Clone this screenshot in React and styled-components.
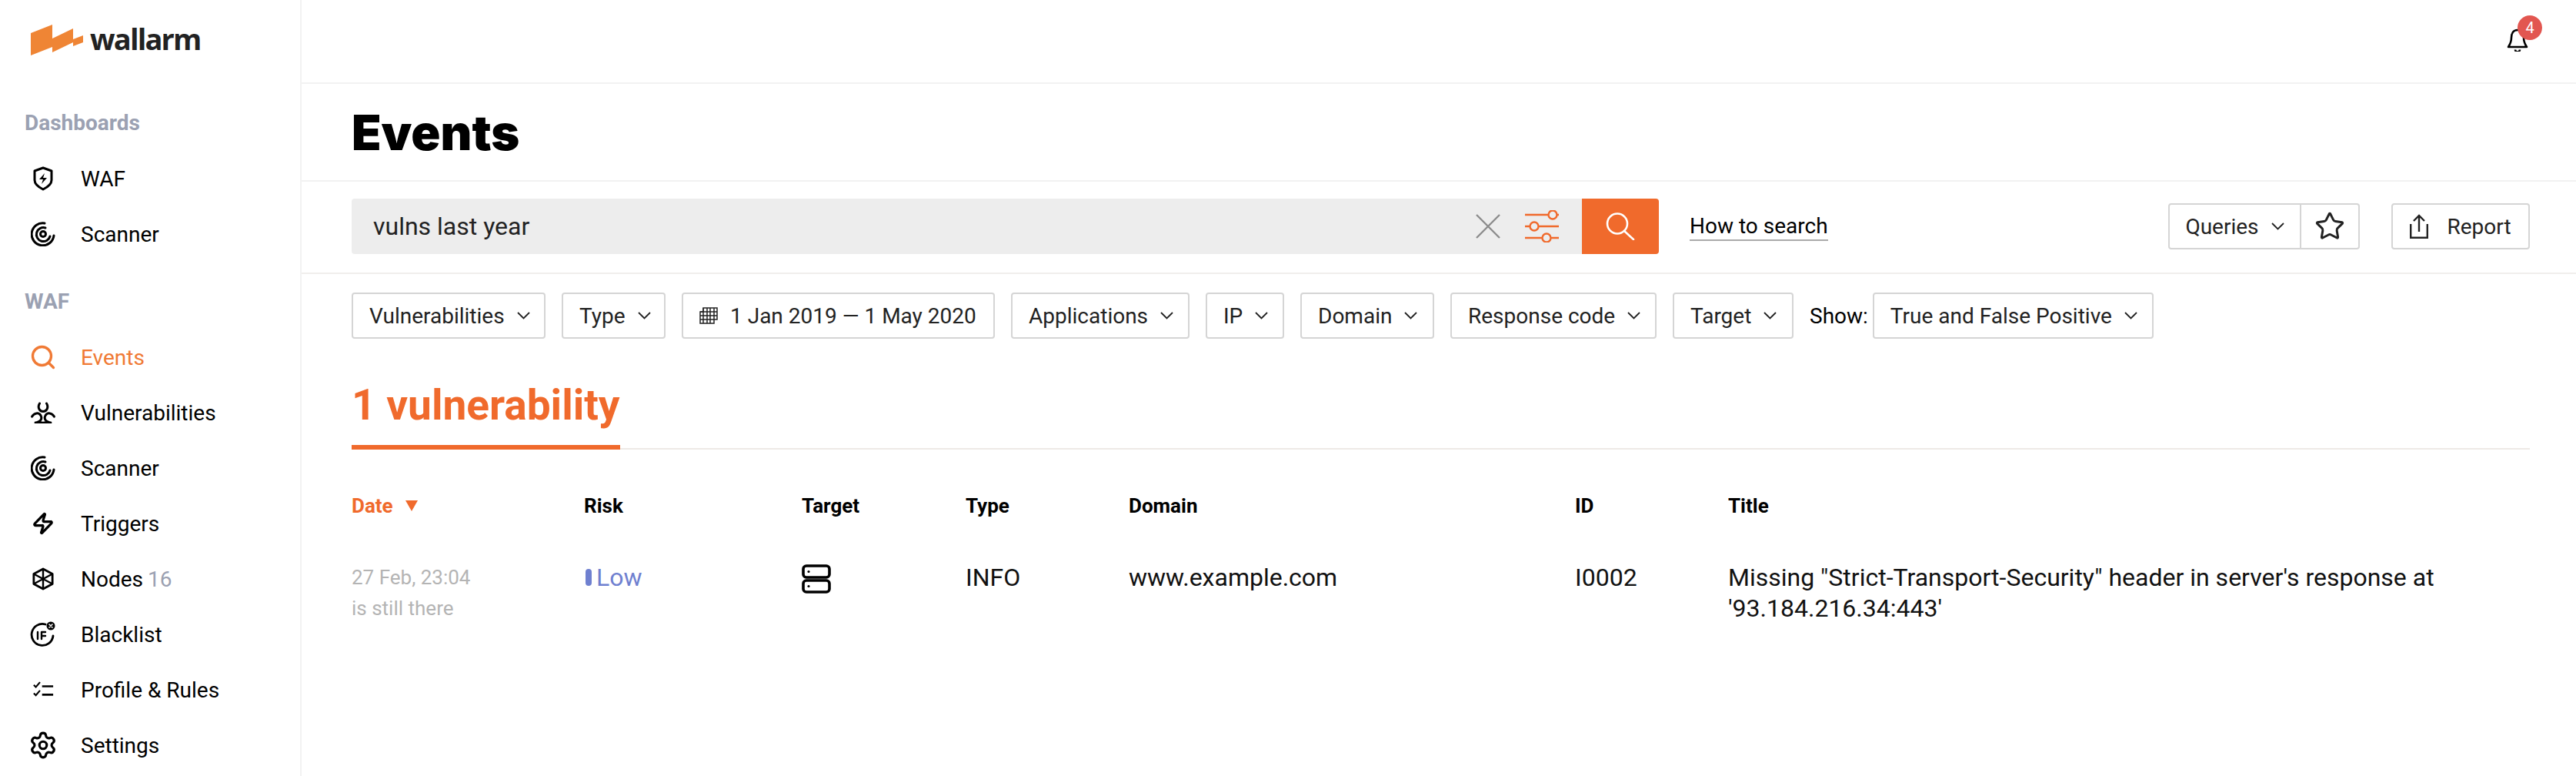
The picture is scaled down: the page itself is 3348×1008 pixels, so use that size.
import React from 'react'
import styled, { createGlobalStyle } from 'styled-components'
import { Search, Star, Settings, Zap } from 'lucide-react'

const Global = createGlobalStyle`
  html, body { margin: 0; padding: 0; background: #fff; }
  body { font-family: Roboto, "Liberation Sans", sans-serif; color: #000; -webkit-font-smoothing: antialiased; }
  * { box-sizing: border-box; }
`

const Page = styled.div`
  display: flex;
  width: 3348px;
  height: 1008px;
  overflow: hidden;
`

const Sidebar = styled.aside`
  width: 392px;
  flex: none;
  border-right: 2px solid #f2f2f2;
  padding: 32px 0 0 32px;
`

const LogoRow = styled.div`
  display: flex;
  align-items: center;
  gap: 7px;
  height: 42px;
  margin-left: 8px;
`

const LogoText = styled.span`
  font-family: "Open Sans", sans-serif;
  font-size: 38px;
  font-weight: 700;
  letter-spacing: -1.8px;
  color: #222;
  line-height: 42px;
  position: relative;
  top: -3px;
`

const NavGroup = styled.div`
  margin-top: ${p => p.$top}px;
`

const NavTitle = styled.div`
  font-size: 28px;
  font-weight: 700;
  color: #9ba1b2;
  line-height: 32px;
  margin-bottom: 20px;
`

const NavItem = styled.div`
  display: flex;
  align-items: center;
  height: 72px;
  font-size: 28px;
  color: ${p => (p.$active ? '#f07a35' : '#000')};
`

const NavIcon = styled.span`
  width: 40px;
  height: 40px;
  margin-left: 4px;
  margin-right: 29px;
  display: flex;
  align-items: center;
  justify-content: center;
`

const Count = styled.span`
  color: #9ba1b2;
  margin-left: 6px;
`

const Main = styled.main`
  flex: 1;
  min-width: 0;
`

const TopBar = styled.div`
  height: 109px;
  border-bottom: 2px solid #f2f2f2;
  display: flex;
  justify-content: flex-end;
  padding: 37px 62px 0 0;
`

const BellWrap = styled.div`
  position: relative;
  width: 28px;
  height: 30px;
`

const Badge = styled.span`
  position: absolute;
  left: 14px;
  top: -17px;
  width: 32px;
  height: 32px;
  border-radius: 50%;
  background: #e25650;
  color: #fff;
  font-size: 20px;
  display: flex;
  align-items: center;
  justify-content: center;
`

const TitleBar = styled.div`
  height: 127px;
  border-bottom: 2px solid #f2f2f2;
  padding-left: 65px;
  display: flex;
  align-items: center;
`

const Title = styled.h1`
  margin: 0;
  font-family: Inter, sans-serif;
  font-size: 63px;
  font-weight: 900;
`

const SearchBar = styled.div`
  height: 120px;
  border-bottom: 2px solid #f0eeec;
  padding: 22px 60px 0 65px;
  display: flex;
  align-items: flex-start;
`

const SearchField = styled.div`
  width: 1599px;
  height: 72px;
  background: #ededed;
  border-radius: 4px 0 0 4px;
  display: flex;
  align-items: center;
  padding: 0 30px 0 28px;
  gap: 32px;
  font-size: 32px;
  color: #222;
`

const SearchText = styled.span`
  flex: 1;
`

const SearchButton = styled.button`
  width: 100px;
  height: 72px;
  padding: 0;
  border: 0;
  border-radius: 0 4px 4px 0;
  background: #f06a2c;
  display: flex;
  align-items: center;
  justify-content: center;
`

const HowTo = styled.a`
  margin: 17px 0 0 40px;
  font-size: 28px;
  line-height: 38px;
  height: 38px;
  color: #000;
  border-bottom: 2px solid #aaa;
`

const Right = styled.div`
  margin-left: auto;
  display: flex;
  gap: 41px;
  padding-top: 6px;
`

const Outline = styled.div`
  height: 60px;
  border: 2px solid #d5d5d5;
  border-radius: 4px;
  display: flex;
  align-items: center;
  font-size: 28px;
  color: #222;
  white-space: nowrap;
  background: #fff;
`

const Part = styled.div`
  display: flex;
  align-items: center;
  justify-content: center;
  height: 100%;
  width: ${p => p.$w}px;
  border-left: ${p => (p.$div ? '2px solid #d5d5d5' : '0')};
  gap: ${p => p.$gap || 0}px;
`

const Filters = styled.div`
  display: flex;
  align-items: center;
  gap: 21px;
  padding: 24px 0 0 65px;
`

const Filter = styled(Outline)`
  width: ${p => p.$w}px;
  padding-left: 21px;
  gap: 16px;
`

const ShowLabel = styled.span`
  font-size: 28px;
  margin-right: -15px;
`

const Content = styled.div`
  padding: 0 60px 0 65px;
`

const Tabs = styled.div`
  margin-top: 40px;
  height: 104px;
  border-bottom: 2px solid #eeeae6;
`

const Tab = styled.div`
  display: inline-block;
  height: 104px;
  line-height: 92px;
  font-size: 55px;
  font-weight: 700;
  color: #f06a2c;
  border-bottom: 6px solid #f06a2c;
  white-space: nowrap;
`

const Row = styled.div`
  display: grid;
  grid-template-columns: 302px 283px 213px 212px 580px 199px 1fr;
`

const HeadRow = styled(Row)`
  margin-top: 57px;
  height: 32px;
  align-items: center;
  font-size: 26px;
  font-weight: 700;
`

const HeadCell = styled.div`
  color: ${p => (p.$active ? '#f06a2c' : '#000')};
  display: flex;
  align-items: center;
  gap: 16px;
`

const Caret = styled.span`
  width: 0;
  height: 0;
  border-left: 8px solid transparent;
  border-right: 8px solid transparent;
  border-top: 14px solid #f06a2c;
`

const BodyRow = styled(Row)`
  margin-top: 57px;
  font-size: 32px;
  line-height: 40px;
  color: #111;
`

const DateCell = styled.div`
  font-size: 26px;
  line-height: 40px;
  color: #b4b4b4;
`

const Risk = styled.div`
  display: flex;
  align-items: center;
  height: 40px;
  color: #6f80d0;
  gap: 6px;
  padding-left: 2px;
`

const RiskMark = styled.span`
  width: 8px;
  height: 22px;
  border-radius: 4px;
  background: #6f80d0;
`

const TargetCell = styled.div`
  padding-top: 3px;
  line-height: 0;
`

const Shield = () => (
  <svg width="26" height="32" viewBox="0 0 26 32" fill="none" stroke="#000" strokeWidth="3">
    <path d="M13 2 L24 6 V18 C24 23 19 27 13 30 C7 27 2 23 2 18 V6 Z" strokeLinejoin="round" />
    <path d="M15 9 L8 17 H13 L11 23 L18 15 H13 Z" fill="#000" stroke="none" />
  </svg>
)

const Radar = () => (
  <svg width="32" height="32" viewBox="0 0 32 32" fill="none" stroke="#000" strokeWidth="3" strokeLinecap="round">
    <path d="M18 2 A14.5 14.5 0 1 0 30 18" />
    <path d="M19 8 A9 9 0 1 0 25 19" />
    <circle cx="16" cy="16" r="3.5" />
  </svg>
)

const lobe = 'M11.5 2 C8.5 7 11 12.5 16 12.5 C21 12.5 23.5 7 20.5 2'

const Biohazard = () => (
  <svg width="32" height="28" viewBox="0 0 32 28" fill="none" stroke="#000" strokeWidth="3" strokeLinecap="round">
    <path d={lobe} />
    <path d={lobe} transform="rotate(120 16 16)" />
    <path d={lobe} transform="rotate(240 16 16)" />
    <path d="M9.5 26 C13 27.5 19 27.5 22.5 26" />
  </svg>
)

const Nodes = () => (
  <svg width="28" height="30" viewBox="0 0 30 32" fill="none" stroke="#000" strokeWidth="3" strokeLinejoin="round">
    <path d="M15 2 L28 9 V23 L15 30 L2 23 V9 Z" />
    <path d="M15 2 V30 M2 9 L28 23 M28 9 L2 23" strokeWidth="2.6" />
  </svg>
)

const BlackIcon = () => (
  <svg width="34" height="34" viewBox="0 0 34 34" fill="none" stroke="#000" strokeWidth="2.8" strokeLinecap="round">
    <path d="M20 4 A14 14 0 1 0 30 19" />
    <path d="M10 14 V23 M15 14 V23 M15 14 H20 M15 19 H20" strokeWidth="2.4" />
    <circle cx="27" cy="6" r="5.5" fill="#000" stroke="none" />
    <path d="M25 4 L29 8 M29 4 L25 8" stroke="#fff" strokeWidth="1.6" />
  </svg>
)

const Rules = () => (
  <svg width="27" height="22" viewBox="0 0 30 24" fill="none" stroke="#000" strokeWidth="3">
    <path d="M1 5 L4 8 L10 1 M1 17 L4 20 L10 13" strokeWidth="2.4" />
    <path d="M13 7 H29 M13 19 H29" />
  </svg>
)

const Logo = () => (
  <svg width="70" height="42" viewBox="0 0 70 42">
    <path d="M0 11 L28 0 V18 L55 5 V19 L68 14 V23 L55 28 V23 L28 36 V29 L0 40 Z" fill="#ef8535" />
  </svg>
)

const BellIcon = () => (
  <svg width="28" height="30" viewBox="0 0 28 30" fill="none" stroke="#000" strokeWidth="2.6" strokeLinejoin="round">
    <path d="M14 2 C8 2 6 7 6 12 C6 18 4 21 2 24 H26 C24 21 22 18 22 12 C22 7 20 2 14 2 Z" />
    <path d="M11 27.5 A3 3 0 0 0 17 27.5" />
  </svg>
)

const Clear = () => (
  <svg width="32" height="32" viewBox="0 0 32 32" stroke="#8c8c8c" strokeWidth="2.4">
    <path d="M1 1 L31 31 M31 1 L1 31" />
  </svg>
)

const Sliders = () => (
  <svg width="44" height="42" viewBox="0 0 44 42" fill="none" stroke="#f06a2c" strokeWidth="2.4">
    <path d="M0 6 H30 M42 6 H44 M0 21 H6 M18 21 H44 M0 36 H22 M34 36 H44" />
    <circle cx="36" cy="6" r="5.5" />
    <circle cx="12" cy="21" r="5.5" />
    <circle cx="28" cy="36" r="5.5" />
  </svg>
)

const SearchGlyph = () => (
  <svg width="38" height="36" viewBox="0 0 38 36" fill="none" stroke="#fff" strokeWidth="2.6" strokeLinecap="round">
    <circle cx="15" cy="14.5" r="13" />
    <path d="M24 24 L36 35" />
  </svg>
)

const Calendar = () => (
  <svg width="24" height="22" viewBox="0 0 24 22" fill="none" stroke="#222" strokeWidth="1.5">
    <path d="M5 1 H23 V16 H19 V21 H1 V6 H5 Z" />
    <path d="M5 1 V21 M10 1 V21 M14 1 V21 M19 1 V16 M1 6 H23 M1 11 H23 M1 16 H19" />
  </svg>
)

const Chevron = () => (
  <svg width="17" height="10" viewBox="0 0 17 10" fill="none" stroke="#222" strokeWidth="1.8">
    <path d="M1 1 L8.5 8.5 L16 1" />
  </svg>
)

const ShareIcon = () => (
  <svg width="24" height="32" viewBox="0 0 24 32" fill="none" stroke="#222" strokeWidth="2.4">
    <path d="M1.2 13 V30.8 H22.8 V13" />
    <path d="M12 23 V2 M5 9 L12 2 L19 9" />
  </svg>
)

const ServerIcon = () => (
  <svg width="38" height="38" viewBox="0 0 38 38" fill="none" stroke="#000" strokeWidth="3.6">
    <rect x="2" y="2" width="34" height="15" rx="4" />
    <rect x="2" y="21" width="34" height="15" rx="4" />
    <circle cx="9" cy="9.5" r="1.6" fill="#000" stroke="none" />
    <circle cx="9" cy="28.5" r="1.6" fill="#000" stroke="none" />
  </svg>
)

const dash = [
  { icon: <Shield />, label: 'WAF' },
  { icon: <Radar />, label: 'Scanner' },
]

const waf = [
  { icon: <Search size={36} color="#f07a35" strokeWidth={2.2} />, label: 'Events', active: true },
  { icon: <Biohazard />, label: 'Vulnerabilities' },
  { icon: <Radar />, label: 'Scanner' },
  { icon: <Zap size={30} color="#000" strokeWidth={2.6} />, label: 'Triggers' },
  { icon: <Nodes />, label: 'Nodes', count: 16 },
  { icon: <BlackIcon />, label: 'Blacklist' },
  { icon: <Rules />, label: 'Profile & Rules' },
  { icon: <Settings size={38} color="#000" strokeWidth={2} />, label: 'Settings' },
]

const filters = [
  ['Vulnerabilities', 252],
  ['Type', 135],
]

const filters2 = [
  ['Applications', 232],
  ['IP', 102],
  ['Domain', 174],
  ['Response code', 268],
  ['Target', 157],
]

function NavList({ items }) {
  return items.map(it => (
    <NavItem key={it.label} $active={it.active}>
      <NavIcon>{it.icon}</NavIcon>
      {it.label}
      {it.count && <Count>{it.count}</Count>}
    </NavItem>
  ))
}

export default function App() {
  return (
    <Page>
      <Global />
      <Sidebar>
        <LogoRow>
          <Logo />
          <LogoText>wallarm</LogoText>
        </LogoRow>
        <NavGroup $top={70}>
          <NavTitle>Dashboards</NavTitle>
          <NavList items={dash} />
        </NavGroup>
        <NavGroup $top={36}>
          <NavTitle>WAF</NavTitle>
          <NavList items={waf} />
        </NavGroup>
      </Sidebar>
      <Main>
        <TopBar>
          <BellWrap>
            <BellIcon />
            <Badge>4</Badge>
          </BellWrap>
        </TopBar>
        <TitleBar>
          <Title>Events</Title>
        </TitleBar>
        <SearchBar>
          <SearchField>
            <SearchText>vulns last year</SearchText>
            <Clear />
            <Sliders />
          </SearchField>
          <SearchButton><SearchGlyph /></SearchButton>
          <HowTo>How to search</HowTo>
          <Right>
            <Outline>
              <Part $w={169} $gap={16}>Queries <Chevron /></Part>
              <Part $w={76} $div><Star size={40} color="#222" strokeWidth={1.8} /></Part>
            </Outline>
            <Outline>
              <Part $w={176} $gap={24}><ShareIcon />Report</Part>
            </Outline>
          </Right>
        </SearchBar>
        <Filters>
          {filters.map(([t, w]) => <Filter key={t} $w={w}>{t}<Chevron /></Filter>)}
          <Filter $w={407}><Calendar />1 Jan 2019 — 1 May 2020</Filter>
          {filters2.map(([t, w]) => <Filter key={t} $w={w}>{t}<Chevron /></Filter>)}
          <ShowLabel>Show:</ShowLabel>
          <Filter $w={365}>True and False Positive<Chevron /></Filter>
        </Filters>
        <Content>
          <Tabs><Tab>1 vulnerability</Tab></Tabs>
          <HeadRow>
            <HeadCell $active>Date<Caret /></HeadCell>
            <HeadCell>Risk</HeadCell>
            <HeadCell>Target</HeadCell>
            <HeadCell>Type</HeadCell>
            <HeadCell>Domain</HeadCell>
            <HeadCell>ID</HeadCell>
            <HeadCell>Title</HeadCell>
          </HeadRow>
          <BodyRow>
            <DateCell>27 Feb, 23:04<br />is still there</DateCell>
            <Risk><RiskMark />Low</Risk>
            <TargetCell><ServerIcon /></TargetCell>
            <div>INFO</div>
            <div>www.example.com</div>
            <div>I0002</div>
            <div>Missing "Strict-Transport-Security" header in server's response at<br />'93.184.216.34:443'</div>
          </BodyRow>
        </Content>
      </Main>
    </Page>
  )
}
